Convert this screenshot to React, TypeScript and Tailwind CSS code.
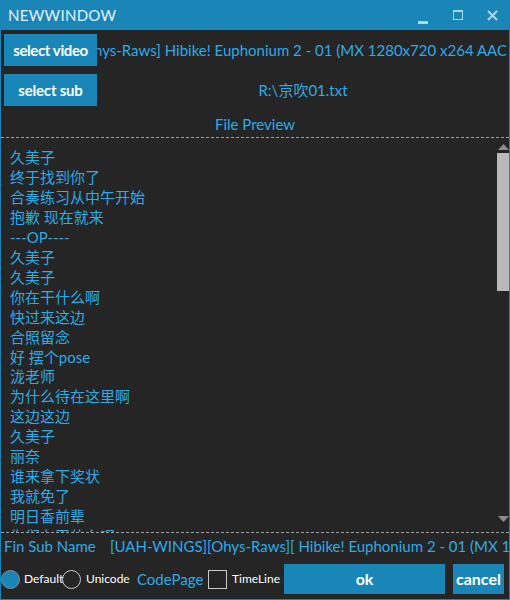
const lines = [
  "久美子",
  "终于找到你了",
  "合奏练习从中午开始",
  "抱歉 现在就来",
  "---OP----",
  "久美子",
  "久美子",
  "你在干什么啊",
  "快过来这边",
  "合照留念",
  "好 摆个pose",
  "泷老师",
  "为什么待在这里啊",
  "这边这边",
  "久美子",
  "丽奈",
  "谁来拿下奖状",
  "我就免了",
  "明日香前辈",
  "你们在干什么呢",
];

const font = { fontFamily: 'Lato, "Noto Sans CJK SC", sans-serif' };

function Radio({ checked }: { checked?: boolean }) {
  return (
    <span
      className={
        checked
          ? "w-[19px] h-[19px] rounded-full border border-[#8a8a8a] bg-[#1a86b8] shrink-0"
          : "w-[19px] h-[19px] rounded-full border-[1.5px] border-[#c8c8c8] shrink-0"
      }
    />
  );
}

export default function App() {
  return (
    <div
      className="w-[510px] h-[600px] bg-[#252525] border-x border-b border-[#1a86b8] flex flex-col overflow-hidden text-[#2cabe8]"
      style={font}
    >
      {/* title bar */}
      <div className="h-[30px] bg-[#1a86b8] flex items-center shrink-0 -mx-px">
        <span className="pl-[8px] text-[15px] text-[#e8f2f8] flex-1 leading-none tracking-[0.3px]">NEWWINDOW</span>
        <div className="flex items-center pr-[12px] text-[#b0d6ea]">
          <svg width="10" height="10" viewBox="0 0 10 10" className="mr-[25px] mt-[7px]">
            <rect x="0" y="7" width="10" height="3" fill="currentColor" />
          </svg>
          <svg width="10" height="10" viewBox="0 0 10 10" className="mr-[24px]">
            <rect x="0.5" y="0.5" width="9" height="9" fill="none" stroke="currentColor" />
            <rect x="0" y="0" width="10" height="2" fill="currentColor" />
          </svg>
          <svg width="11" height="11" viewBox="0 0 11 11">
            <path d="M1 1 L10 10 M10 1 L1 10" stroke="currentColor" strokeWidth="2" />
          </svg>
        </div>
      </div>

      {/* select video */}
      <div className="flex items-center mt-[4px] pl-[3px] h-[32px] shrink-0">
        <button className="w-[93px] h-[32px] bg-[#1a86b8] text-white font-bold text-[15px] tracking-[-0.4px] shrink-0">
          select video
        </button>
        <div className="flex-1 overflow-hidden flex justify-end pr-[2px]">
          <span className="whitespace-nowrap text-[15px]">
            [UAH-WINGS][Ohys-Raws] Hibike! Euphonium 2 - 01 (MX 1280x720 x264 AAC
          </span>
        </div>
      </div>

      {/* select sub */}
      <div className="flex items-center mt-[8px] pl-[3px] h-[32px] shrink-0">
        <button className="w-[93px] h-[32px] bg-[#1a86b8] text-white font-bold text-[15px] tracking-[-0.2px] shrink-0">
          select sub
        </button>
        <div className="flex-1 flex justify-center text-[15px]">R:\京吹01.txt</div>
      </div>

      <div className="h-[31px] pt-[8px] text-center text-[15px] leading-[20px] shrink-0">File Preview</div>

      {/* preview */}
      <div className="h-[396px] border-y border-dashed border-[#a0a0a0] flex shrink-0 overflow-hidden">
        <div className="flex-1 pl-[9px] pt-[10px] overflow-hidden">
          {lines.map((l, i) => (
            <div key={i} className="text-[15px] leading-[19.95px] whitespace-nowrap">
              {l}
            </div>
          ))}
        </div>
        <div className="w-[12px] flex flex-col items-stretch shrink-0">
          <div className="h-[15px] flex items-center justify-center pt-[2px]">
            <svg width="11" height="6" viewBox="0 0 11 6">
              <path d="M0 6 L5.5 0 L11 6 Z" fill="#8c8c8c" />
            </svg>
          </div>
          <div className="h-[138px] bg-[#b9b9b9]" />
          <div className="flex-1" />
          <div className="h-[16px] flex items-start justify-center">
            <svg width="11" height="6" viewBox="0 0 11 6">
              <path d="M0 0 L11 0 L5.5 6 Z" fill="#8c8c8c" />
            </svg>
          </div>
        </div>
      </div>

      {/* fin sub name */}
      <div className="h-[27px] flex items-center pl-[3px] text-[15px] whitespace-nowrap overflow-hidden shrink-0">
        <span className="w-[106px] shrink-0">Fin Sub Name</span>
        <span>[UAH-WINGS][Ohys-Raws][ Hibike! Euphonium 2 - 01 (MX 1280x720 x264 AAC)</span>
      </div>

      {/* bottom row */}
      <div className="flex items-center h-[30px] mt-[4px] shrink-0 whitespace-nowrap">
        <Radio checked />
        <span className="w-[38px] ml-[4px] text-[12px] text-white shrink-0">Default</span>
        <Radio />
        <span className="w-[46px] ml-[5px] text-[12px] text-white shrink-0">Unicode</span>
        <span className="w-[66px] ml-[5px] text-[15px] shrink-0">CodePage</span>
        <span className="w-[19px] h-[19px] border-[1.5px] border-[#c8c8c8] ml-[5px] shrink-0" />
        <span className="w-[47px] ml-[5px] text-[12px] text-white shrink-0">TimeLine</span>
        <button className="w-[161px] h-[30px] bg-[#1a86b8] text-white font-bold text-[16px] ml-[5px] shrink-0">
          ok
        </button>
        <button className="w-[51px] h-[30px] bg-[#1a86b8] text-white font-bold text-[16px] ml-[8px] shrink-0">
          cancel
        </button>
      </div>
    </div>
  );
}
